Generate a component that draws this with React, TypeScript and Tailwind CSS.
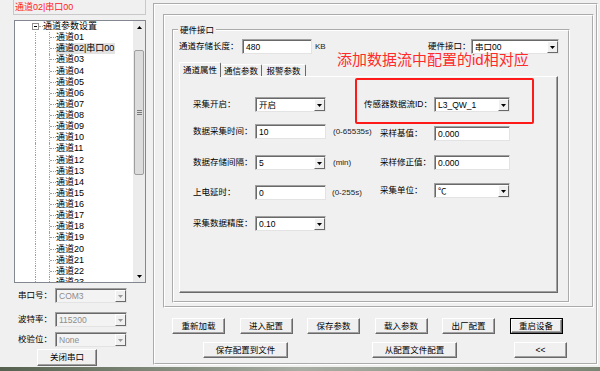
import React from "react";

const FONT = "font-['Liberation_Sans','Noto_Sans_CJK_SC',sans-serif]";

function Down({ color = "#000" }: { color?: string }) {
  return (
    <svg width="5" height="3" viewBox="0 0 5 3" className="block">
      <path d="M0 0H5L2.5 3Z" fill={color} />
    </svg>
  );
}
function Up({ color = "#000" }: { color?: string }) {
  return (
    <svg width="5" height="3" viewBox="0 0 5 3" className="block">
      <path d="M0 3H5L2.5 0Z" fill={color} />
    </svg>
  );
}

function Combo({
  className,
  value,
  disabled,
}: {
  className: string;
  value: string;
  disabled?: boolean;
}) {
  return (
    <div
      className={`flex h-[15px] shrink-0 border border-[#a0a0a0] border-b-[#e3e3e3] border-r-[#e3e3e3] shadow-[inset_1px_1px_0_#696969] ${
        disabled ? "bg-[#f3f3f3] text-[#8d8d8d]" : "bg-white text-black"
      } ${className}`}
    >
      <div className="flex-1 overflow-hidden whitespace-nowrap pl-[3px] pt-[1px] text-[8.5px] leading-[12px]">
        {value}
      </div>
      <div className="mt-[1px] flex h-[12px] w-[11px] items-center justify-center border border-white border-b-[#696969] border-r-[#696969] bg-[#f0f0f0]">
        <Down color={disabled ? "#9a9a9a" : "#000"} />
      </div>
    </div>
  );
}

function Input({ className, value }: { className: string; value: string }) {
  return (
    <div
      className={`h-[15px] shrink-0 overflow-hidden whitespace-nowrap border border-[#a0a0a0] border-b-[#e3e3e3] border-r-[#e3e3e3] bg-white pl-[3px] pt-[1px] text-[8.5px] leading-[12px] shadow-[inset_1px_1px_0_#696969] ${className}`}
    >
      {value}
    </div>
  );
}

function Btn({
  className,
  children,
  def,
}: {
  className: string;
  children: React.ReactNode;
  def?: boolean;
}) {
  return (
    <div className={`shrink-0 ${def ? "border border-black" : ""} ${className}`}>
      <div className="flex h-full w-full items-center justify-center whitespace-nowrap border border-white border-b-[#696969] border-r-[#696969] bg-[#f0f0f0] text-[8.5px] leading-none text-black shadow-[inset_-1px_-1px_0_#a0a0a0]">
        {children}
      </div>
    </div>
  );
}

const children = [
  "通道01",
  "通道02|串口00",
  "通道03",
  "通道04",
  "通道05",
  "通道06",
  "通道07",
  "通道08",
  "通道09",
  "通道10",
  "通道11",
  "通道12",
  "通道13",
  "通道14",
  "通道15",
  "通道16",
  "通道17",
  "通道18",
  "通道19",
  "通道20",
  "通道21",
  "通道22",
  "通道23",
];

function Tree() {
  return (
    <div className="h-full w-[118px] overflow-hidden text-[9px] leading-[11px]">
      <div className="flex h-[11.14px] items-center">
        <div className="w-[17px] shrink-0" />
        <div className="flex h-[7px] w-[7px] shrink-0 items-center justify-center border border-[#919191] bg-white">
          <div className="h-px w-[3px] bg-black" />
        </div>
        <div className="w-[4px] shrink-0 border-t border-dotted border-[#a0a0a0]" />
        <span className="whitespace-nowrap">通道参数设置</span>
      </div>
      {children.map((c, i) => (
        <div key={c} className="flex h-[11.14px]">
          <div className="w-[20px] shrink-0" />
          <div className="w-[14px] shrink-0 border-l border-dotted border-[#a0a0a0]" />
          <div className="flex w-[7px] shrink-0 items-center border-l border-dotted border-[#a0a0a0]">
            <div className="w-full border-t border-dotted border-[#a0a0a0]" />
          </div>
          <span
            className={`whitespace-nowrap leading-[11.14px] ${
              i === 1 ? "bg-[#e3e3e3] pr-[1px]" : ""
            }`}
          >
            {c}
          </span>
        </div>
      ))}
    </div>
  );
}

function Scrollbar() {
  return (
    <div className="flex h-full w-[12px] shrink-0 flex-col bg-[#ececec]">
      <div className="flex h-[12px] items-center justify-center">
        <Up />
      </div>
      <div className="h-[17px]" />
      <div className="mx-[1px] flex h-[125px] flex-col items-center justify-center gap-[1px] rounded-[2px] border border-[#9e9e9e] bg-[#dcdcdc]">
        <div className="h-px w-[5px] bg-[#7a7a7a]" />
        <div className="h-px w-[5px] bg-[#7a7a7a]" />
        <div className="h-px w-[5px] bg-[#7a7a7a]" />
      </div>
      <div className="flex-1" />
      <div className="flex h-[12px] items-center justify-center">
        <Down />
      </div>
    </div>
  );
}

function LeftRow({ label, value, mt }: { label: string; value: string; mt: string }) {
  return (
    <div className={`flex h-[15px] items-center ${mt}`}>
      <div className="ml-[18px] w-[37px] shrink-0 whitespace-nowrap text-[8.5px] leading-none">{label}</div>
      <Combo className="w-[72px]" value={value} disabled />
    </div>
  );
}

function LeftPanel() {
  return (
    <div className="flex w-[153px] shrink-0 flex-col">
      <div className="ml-[13px] h-[15px] w-[133px] border-x border-b border-[#c9c9c9] pl-[1px] text-[9px] leading-[14px] text-[#ff2020]">
        通道02|串口00
      </div>
      <div className="ml-[14px] mt-[5px] flex h-[263px] w-[132px] border border-[#828790] bg-white">
        <Tree />
        <Scrollbar />
      </div>
      <LeftRow label="串口号：" value="COM3" mt="mt-[5px]" />
      <LeftRow label="波特率：" value="115200" mt="mt-[9px]" />
      <LeftRow label="校验位：" value="None" mt="mt-[5px]" />
      <Btn className="ml-[37px] mt-[2px] h-[17px] w-[60px]">关闭串口</Btn>
    </div>
  );
}

function Label({ className, children }: { className: string; children: React.ReactNode }) {
  return (
    <div className={`shrink-0 whitespace-nowrap text-[8.5px] leading-none ${className}`}>{children}</div>
  );
}

function Unit({ className, children }: { className: string; children: React.ReactNode }) {
  return (
    <div className={`whitespace-nowrap text-[8px] leading-none text-[#222] ${className}`}>{children}</div>
  );
}

function TabPage() {
  return (
    <div className="ml-[5px] flex h-[217px] w-[379px] border-l border-t border-white border-b-[#696969] border-r-[#696969] border-b border-r shadow-[inset_-1px_-1px_0_#a0a0a0]">
      <div className="flex w-[184px] shrink-0 flex-col pl-[13px] pt-[20px]">
        <div className="flex h-[15px] items-center">
          <Label className="w-[62px]">采集开启：</Label>
          <Combo className="w-[71px]" value="开启" />
        </div>
        <div className="mt-[12px] flex h-[15px] items-center">
          <Label className="w-[62px]">数据采集时间：</Label>
          <Input className="w-[71px]" value="10" />
          <Unit className="ml-[7px]">(0-65535s)</Unit>
        </div>
        <div className="mt-[16px] flex h-[15px] items-center">
          <Label className="w-[62px]">数据存储间隔：</Label>
          <Combo className="w-[71px]" value="5" />
          <Unit className="ml-[7px]">(min)</Unit>
        </div>
        <div className="mt-[15px] flex h-[15px] items-center">
          <Label className="w-[62px]">上电延时：</Label>
          <Input className="w-[71px]" value="0" />
          <Unit className="ml-[6px]">(0-255s)</Unit>
        </div>
        <div className="mt-[16px] flex h-[15px] items-center">
          <Label className="w-[62px]">采集数据精度：</Label>
          <Combo className="w-[71px]" value="0.10" />
        </div>
      </div>
      <div className="flex flex-col pt-[20px]">
        <div className="flex h-[15px] items-center">
          <Label className="w-[70px]">传感器数据流ID：</Label>
          <Combo className="w-[76px]" value="L3_QW_1" />
        </div>
        <div className="mt-[14px] flex h-[15px] items-center pl-[16px]">
          <Label className="w-[54px]">采样基值：</Label>
          <Input className="w-[76px]" value="0.000" />
        </div>
        <div className="mt-[14px] flex h-[15px] items-center pl-[16px]">
          <Label className="w-[54px]">采样修正值：</Label>
          <Input className="w-[76px]" value="0.000" />
        </div>
        <div className="mt-[13px] flex h-[15px] items-center pl-[16px]">
          <Label className="w-[54px]">采集单位：</Label>
          <Combo className="w-[76px]" value="℃" />
        </div>
      </div>
    </div>
  );
}

function RightPanel() {
  return (
    <div className="flex-1">
      <div className="mt-[3px] flex h-[362px] w-[445px] flex-col border-2 border-white [border-style:groove]">
        <div className="ml-[8px] mt-[9px] h-[294px] w-[431px] shrink-0 border-2 border-white [border-style:groove]">
          <fieldset className="m-0 ml-[7px] mt-[9px] h-[278px] w-[398px] min-w-0 border-2 border-white p-0 [border-style:groove]">
            <legend className="ml-[4px] px-[2px] text-[8.5px] leading-[10px]">硬件接口</legend>
            <div className="mt-[4px] flex h-[15px] items-center">
              <Label className="ml-[5px] w-[63px]">通道存储长度：</Label>
              <Input className="w-[70px]" value="480" />
              <Unit className="ml-[3px] w-[20px] text-[7.5px]">KB</Unit>
              <Label className="ml-[93px] w-[43px]">硬件接口：</Label>
              <Combo className="w-[88px]" value="串口00" />
            </div>
            <div className="relative z-10 ml-[5px] mt-[8px] flex h-[14px] items-end">
              <div className="-mb-px h-[15px] w-[42px] rounded-t-[2px] border-l border-r border-t border-white border-r-[#696969] bg-[#f0f0f0] pt-[2px] text-center text-[8.5px] leading-[10px]">
                通道属性
              </div>
              <div className="h-[12px] w-[41px] rounded-t-[2px] border-r border-t border-white border-r-[#696969] bg-[#f0f0f0] pt-[1px] text-center text-[8.5px] leading-[10px]">
                通信参数
              </div>
              <div className="h-[12px] w-[44px] rounded-t-[2px] border-r border-t border-white border-r-[#696969] bg-[#f0f0f0] pt-[1px] text-center text-[8.5px] leading-[10px]">
                报警参数
              </div>
            </div>
            <TabPage />
          </fieldset>
        </div>
        <div className="ml-[17px] mt-[10px] flex h-[16px] gap-[14.5px]">
          <Btn className="h-[16px] w-[53px]">重新加载</Btn>
          <Btn className="h-[16px] w-[53px]">进入配置</Btn>
          <Btn className="h-[16px] w-[53px]">保存参数</Btn>
          <Btn className="h-[16px] w-[53px]">载入参数</Btn>
          <Btn className="h-[16px] w-[53px]">出厂配置</Btn>
          <Btn className="h-[16px] w-[53px]" def>
            重启设备
          </Btn>
        </div>
        <div className="mt-[8px] flex h-[16px]">
          <Btn className="ml-[48px] h-[16px] w-[85px]">保存配置到文件</Btn>
          <Btn className="ml-[84px] h-[16px] w-[85px]">从配置文件配置</Btn>
          <Btn className="ml-[57px] h-[16px] w-[53px]">&lt;&lt;</Btn>
        </div>
      </div>
    </div>
  );
}

export default function App() {
  return (
    <div className={`relative flex h-[371px] w-[600px] flex-col overflow-hidden bg-[#f0f0f0] text-black ${FONT}`}>
      <div className="flex h-[367px] shrink-0">
        <LeftPanel />
        <RightPanel />
      </div>
      <div className="h-[4px] bg-linear-to-r from-[#56624f] via-[#a9aea4] to-[#7b8574]" />
      <div className="absolute left-[337px] top-[53px] whitespace-nowrap text-[15px] leading-[13px] text-[#ff2b2b]">
        添加数据流中配置的id相对应
      </div>
      <div className="absolute left-[355px] top-[78px] h-[46px] w-[179px] rounded-[2px] border-2 border-[#ff1a1a]" />
    </div>
  );
}
